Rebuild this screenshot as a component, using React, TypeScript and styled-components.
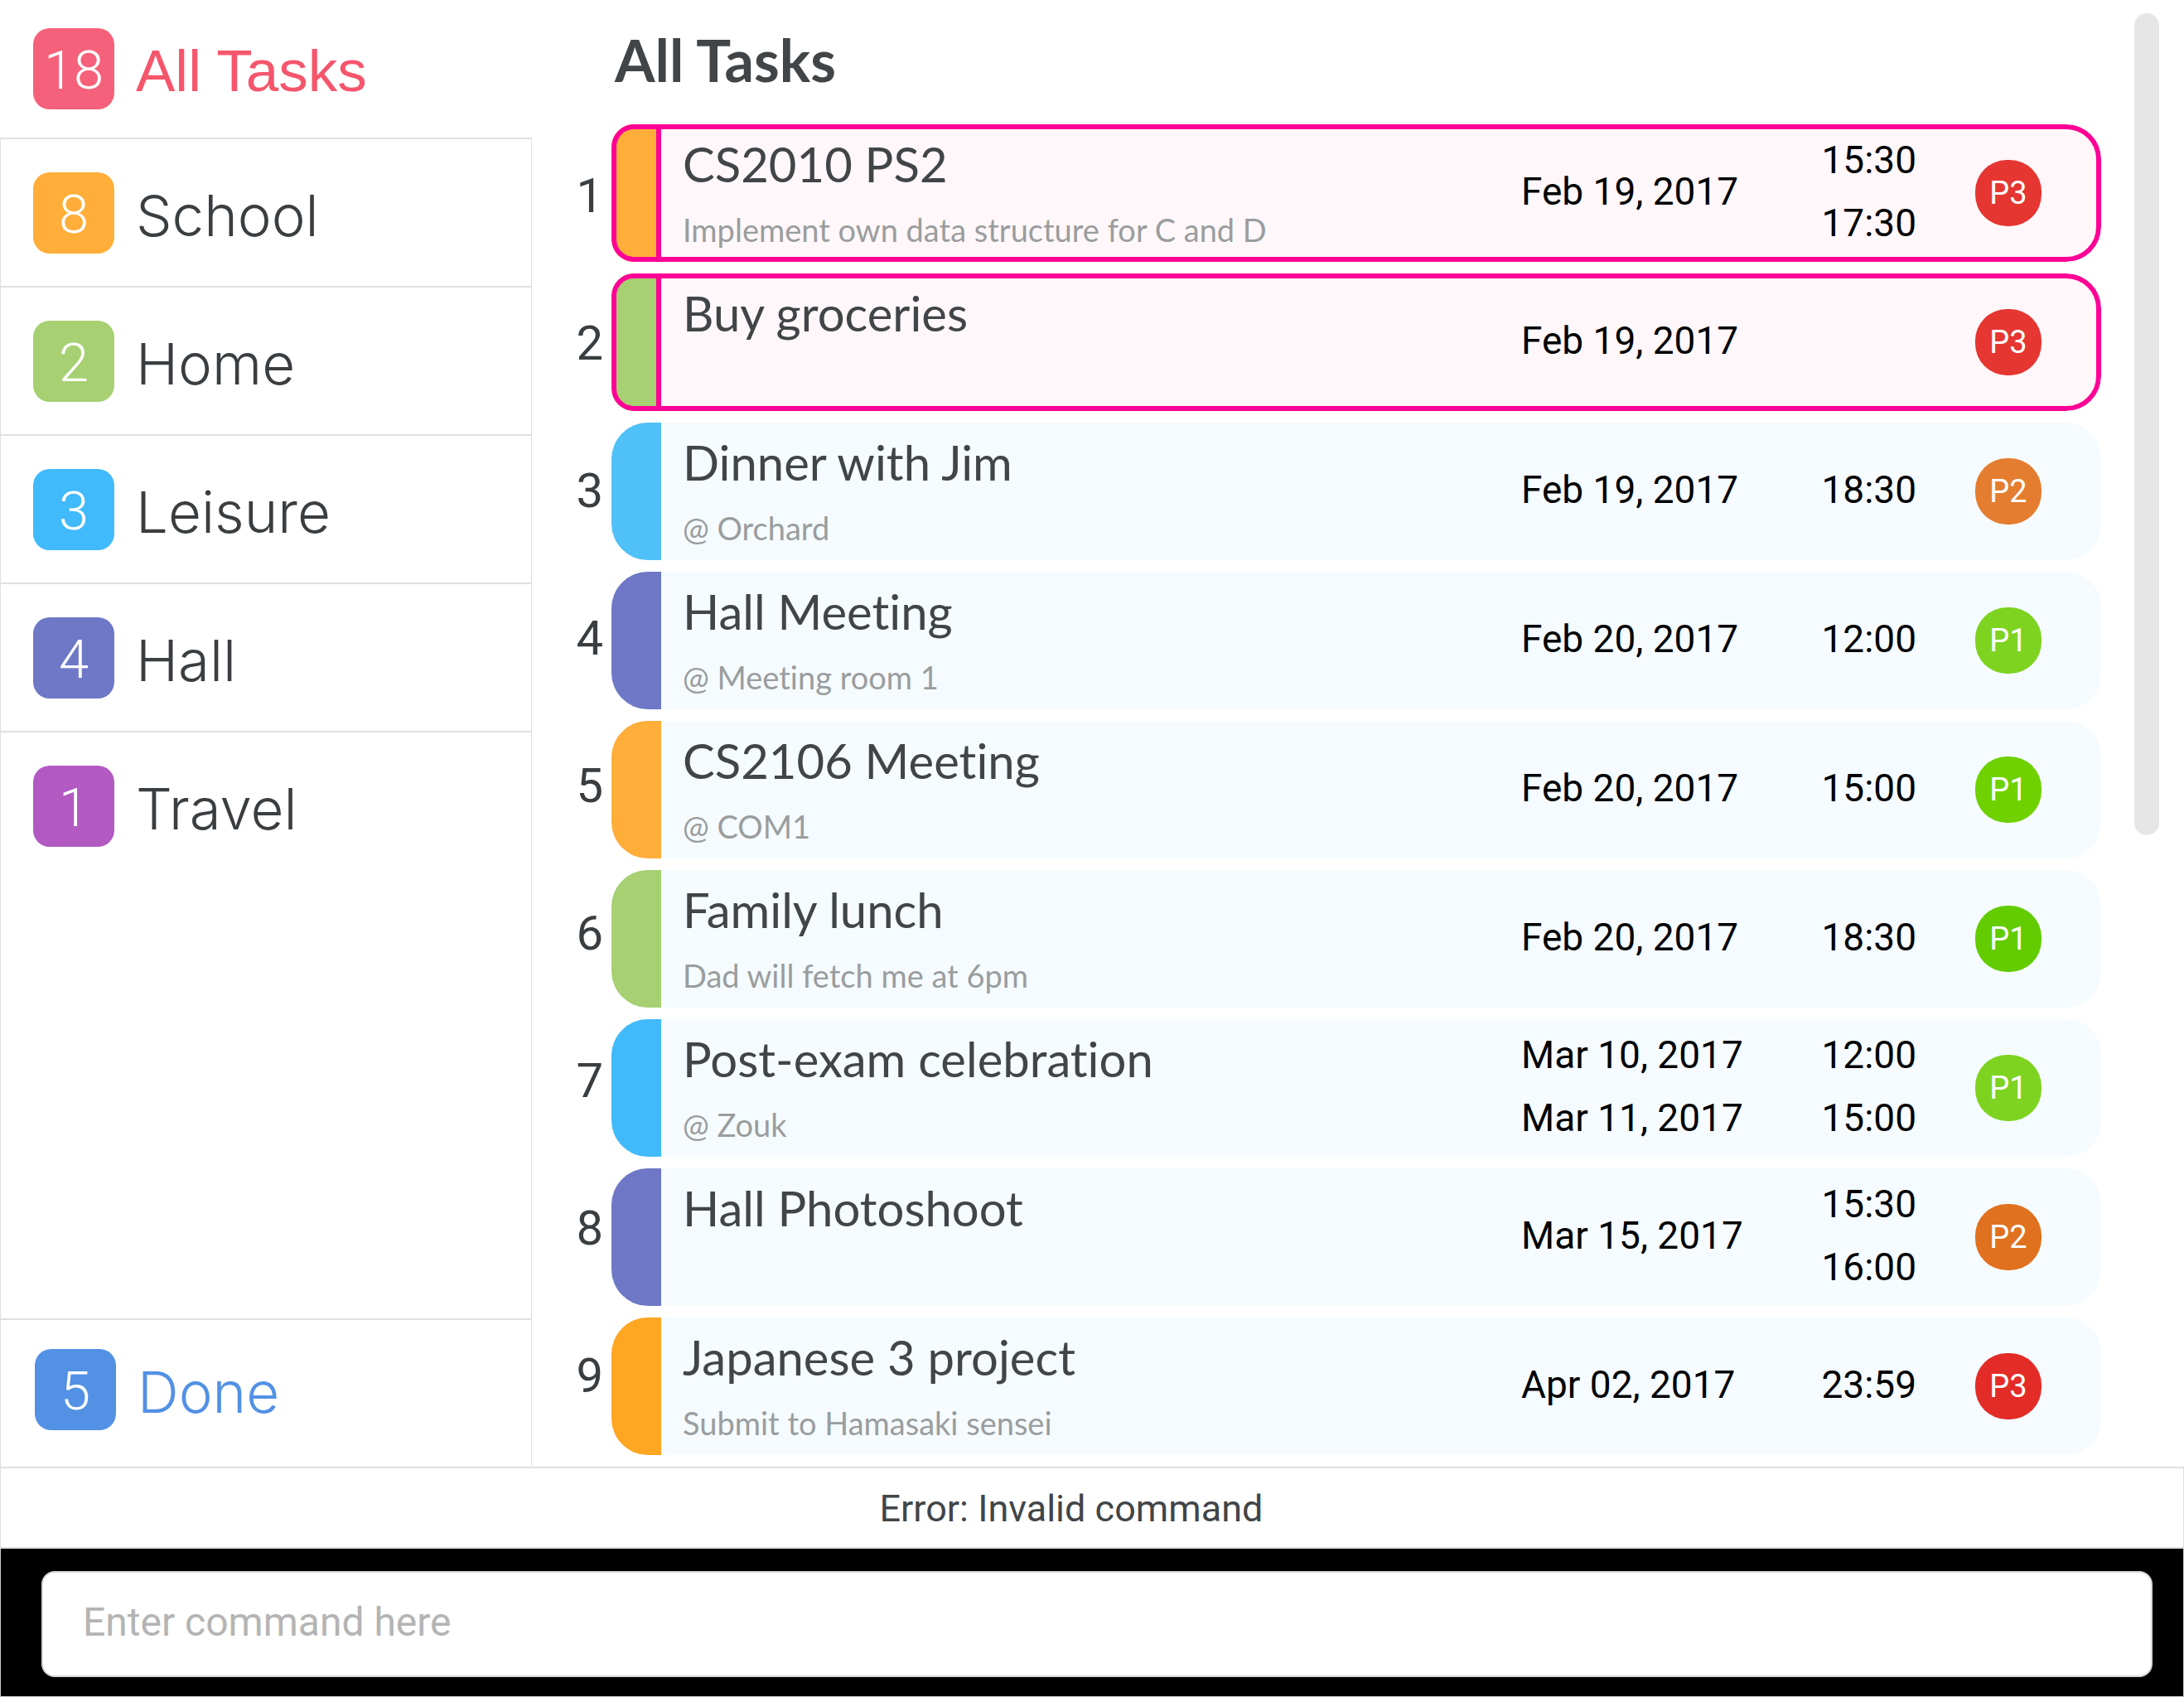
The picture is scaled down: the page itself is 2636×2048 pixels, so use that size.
import React from "react";
import styled, { createGlobalStyle } from "styled-components";

const display = `Lato, "Noto Sans", sans-serif`;
const numeric = `Roboto, "Noto Sans", sans-serif`;
const line = "#e0e0e0";
const ink = "#414548";

const palette = {
  red: "#f5617a",
  orange: "#ffae3a",
  green: "#a6d072",
  sky: "#40bafa",
  indigo: "#6e78c6",
  purple: "#b25ac2",
  blue: "#5291e4",
};

const GlobalStyle = createGlobalStyle`
  *, *::before, *::after { box-sizing: border-box; }
  body {
    margin: 0;
    background: #fff;
    color: ${ink};
    font-family: ${display};
    font-variant-ligatures: none;
  }
  h1, h2, p, ol, ul { margin: 0; padding: 0; }
  ol, ul { list-style: none; }
`;

const Page = styled.div`
  display: flex;
  flex-direction: column;
  min-height: 100vh;
`;

const Body = styled.div`
  flex: 1;
  display: grid;
  grid-template-columns: 642px minmax(0, 1fr);
`;

/* Sidebar */

const Sidebar = styled.nav`
  display: flex;
  flex-direction: column;
`;

const Categories = styled.div`
  flex: 1;
  display: flex;
  flex-direction: column;
  justify-content: space-between;
  border: solid ${line};
  border-width: 0 1px;
`;

const CategoryList = styled.ul`
  li + li {
    border-top: 2px solid ${line};
  }
`;

const CategoryLink = styled.a<{ $color: string; $space: string; $active?: boolean }>`
  display: flex;
  align-items: center;
  gap: 26px;
  padding: ${(p) => p.$space};
  color: ${(p) => p.$color};
  font: ${(p) => (p.$active ? `400 71px/88px "Liberation Sans", sans-serif` : `300 69px/88px Inter, sans-serif`)};
  text-decoration: none;
`;

const AllTasks = styled.div`
  border-bottom: 2px solid ${line};
`;

const DoneRow = styled.div`
  border-top: 2px solid ${line};
`;

const Count = styled.span<{ $color: string }>`
  display: grid;
  place-items: center;
  width: 98px;
  height: 98px;
  padding-top: 4px;
  border-radius: 20px;
  background: ${(p) => p.$color};
  color: #fff;
  font: 300 65px/80px ${numeric};
`;

const CategoryName = styled.span`
  padding-top: 6px;
`;

/* Task list */

const Main = styled.main`
  display: flex;
  padding-right: 30px;
`;

const Tasks = styled.section`
  flex: 1;
  min-width: 0;
  padding: 30px 40px 14px 0;
`;

const Heading = styled.h1`
  margin-bottom: 36px;
  padding-left: 100px;
  font-size: 70px;
  font-weight: 700;
  line-height: 84px;
`;

const Columns = styled.div`
  display: grid;
  grid-template-columns: 96px minmax(0, 1fr);
`;

const Numbers = styled.ol`
  display: flex;
  flex-direction: column;
  gap: 6px;
  padding-right: 10px;
  color: #3a3e41;
  font: 400 58px/172px ${numeric};
  text-align: right;
`;

const Cards = styled.ol`
  display: flex;
  flex-direction: column;
  gap: 14px;
`;

const Card = styled.li<{ $selected?: boolean }>`
  position: relative;
  display: grid;
  grid-template-columns: 60px minmax(0, 1fr) 359px 118px 151px;
  height: 166px;
  padding-right: 72px;
  border-radius: ${(p) => (p.$selected ? "27px 42px 42px 27px" : "44px 42px 42px 44px")};
  background: ${(p) => (p.$selected ? "#fff7f9" : "#f5fbff")};
  overflow: hidden;

  &::after {
    content: "";
    position: absolute;
    inset: 0;
    border: ${(p) => (p.$selected ? "6px solid #ff0097" : "0")};
    border-radius: inherit;
    pointer-events: none;
  }
`;

const Stripe = styled.span<{ $color: string; $selected?: boolean }>`
  background: ${(p) => p.$color};
  border-right: ${(p) => (p.$selected ? "6px solid #ff0097" : "0")};
`;

const Details = styled.div`
  padding: 12px 0 0 26px;
`;

const Title = styled.h2`
  font-size: 58px;
  font-weight: 400;
  line-height: 72px;
`;

const Note = styled.p`
  margin-top: 19px;
  color: #9a9d9e;
  font-size: 38px;
  font-weight: 400;
  line-height: 48px;
`;

const When = styled.div<{ $align?: string }>`
  display: flex;
  flex-direction: column;
  justify-content: center;
  padding-bottom: 5px;
  color: #000;
  font: 400 46px/76px ${numeric};
  text-align: ${(p) => p.$align ?? "left"};
`;

const Priority = styled.span<{ $color: string }>`
  display: grid;
  place-items: center;
  place-self: center end;
  width: 80px;
  height: 80px;
  border-radius: 38px;
  background: ${(p) => p.$color};
  color: #fff;
  font: 400 38px/48px ${numeric};
`;

const ScrollTrack = styled.div`
  width: 30px;
  padding: 16px 0 14px;
`;

const ScrollThumb = styled.div`
  height: 57%;
  border-radius: 15px;
  background: #e6e6e6;
`;

/* Command area */

const Status = styled.p`
  padding: 21px 50px 18px 0;
  border: solid ${line};
  border-width: 2px 1px;
  font: 400 45px/56px ${numeric};
  text-align: center;
`;

const CommandBar = styled.form`
  padding: 27px 37px 23px 49px;
  border: solid #c8c8c8;
  border-width: 0 1px 1px;
  background: #000;
`;

const CommandInput = styled.input`
  display: block;
  width: 100%;
  height: 128px;
  padding: 0 48px 6px;
  border: 2px solid #d6d6d6;
  border-radius: 16px;
  background: #fff;
  color: ${ink};
  font: 400 48px/60px ${numeric};
  outline: none;

  &::placeholder {
    color: #b4b4b4;
    opacity: 1;
  }
`;

const categories = [
  { name: "School", count: 8, color: palette.orange },
  { name: "Home", count: 2, color: palette.green },
  { name: "Leisure", count: 3, color: palette.sky },
  { name: "Hall", count: 4, color: palette.indigo },
  { name: "Travel", count: 1, color: palette.purple },
];

type Task = {
  title: string;
  note?: string;
  stripe: string;
  dates: string[];
  times: string[];
  priority: string;
  tint: string;
  selected?: boolean;
};

const tasks: Task[] = [
  { title: "CS2010 PS2", note: "Implement own data structure for C and D", stripe: palette.orange, dates: ["Feb 19, 2017"], times: ["15:30", "17:30"], priority: "P3", tint: "#e53632", selected: true },
  { title: "Buy groceries", stripe: palette.green, dates: ["Feb 19, 2017"], times: [], priority: "P3", tint: "#e53632", selected: true },
  { title: "Dinner with Jim", note: "@ Orchard", stripe: "#50c1f8", dates: ["Feb 19, 2017"], times: ["18:30"], priority: "P2", tint: "#e47d2f" },
  { title: "Hall Meeting", note: "@ Meeting room 1", stripe: palette.indigo, dates: ["Feb 20, 2017"], times: ["12:00"], priority: "P1", tint: "#7ed321" },
  { title: "CS2106 Meeting", note: "@ COM1", stripe: palette.orange, dates: ["Feb 20, 2017"], times: ["15:00"], priority: "P1", tint: "#6fd100" },
  { title: "Family lunch", note: "Dad will fetch me at 6pm", stripe: palette.green, dates: ["Feb 20, 2017"], times: ["18:30"], priority: "P1", tint: "#62cc00" },
  { title: "Post-exam celebration", note: "@ Zouk", stripe: palette.sky, dates: ["Mar 10, 2017", "Mar 11, 2017"], times: ["12:00", "15:00"], priority: "P1", tint: "#7ed321" },
  { title: "Hall Photoshoot", stripe: palette.indigo, dates: ["Mar 15, 2017"], times: ["15:30", "16:00"], priority: "P2", tint: "#e0711f" },
  { title: "Japanese 3 project", note: "Submit to Hamasaki sensei", stripe: "#ffa622", dates: ["Apr 02, 2017"], times: ["23:59"], priority: "P3", tint: "#e32c27" },
];

function Category(props: { name: string; count: number; color: string; text?: string; space?: string; active?: boolean }) {
  return (
    <CategoryLink
      href="#"
      $color={props.text ?? "#3a3e41"}
      $space={props.space ?? "40px 39px 39px"}
      $active={props.active}
      aria-current={props.active ? "page" : undefined}
    >
      <Count $color={props.color}>{props.count}</Count>
      <CategoryName>{props.name}</CategoryName>
    </CategoryLink>
  );
}

function TaskCard({ task }: { task: Task }) {
  return (
    <Card $selected={task.selected}>
      <Stripe $color={task.stripe} $selected={task.selected} />
      <Details>
        <Title>{task.title}</Title>
        {task.note && <Note>{task.note}</Note>}
      </Details>
      <When>
        {task.dates.map((d) => (
          <time key={d}>{d}</time>
        ))}
      </When>
      <When $align="right">
        {task.times.map((t) => (
          <time key={t}>{t}</time>
        ))}
      </When>
      <Priority $color={task.tint}>{task.priority}</Priority>
    </Card>
  );
}

export default function App() {
  return (
    <Page>
      <GlobalStyle />
      <Body>
        <Sidebar>
          <AllTasks>
            <Category name="All Tasks" count={18} color={palette.red} text="#f5566c" space="34px 40px" active />
          </AllTasks>
          <Categories>
            <CategoryList>
              {categories.map((c) => (
                <li key={c.name}>
                  <Category {...c} />
                </li>
              ))}
            </CategoryList>
            <DoneRow>
              <Category name="Done" count={5} color={palette.blue} text={palette.blue} space="35px 41px 44px" />
            </DoneRow>
          </Categories>
        </Sidebar>
        <Main>
          <Tasks>
            <Heading>All Tasks</Heading>
            <Columns>
              <Numbers>
                {tasks.map((t, i) => (
                  <li key={t.title}>{i + 1}</li>
                ))}
              </Numbers>
              <Cards>
                {tasks.map((t) => (
                  <TaskCard key={t.title} task={t} />
                ))}
              </Cards>
            </Columns>
          </Tasks>
          <ScrollTrack>
            <ScrollThumb />
          </ScrollTrack>
        </Main>
      </Body>
      <Status role="status">Error: Invalid command</Status>
      <CommandBar onSubmit={(e) => e.preventDefault()}>
        <CommandInput type="text" aria-label="Command" placeholder="Enter command here" />
      </CommandBar>
    </Page>
  );
}
